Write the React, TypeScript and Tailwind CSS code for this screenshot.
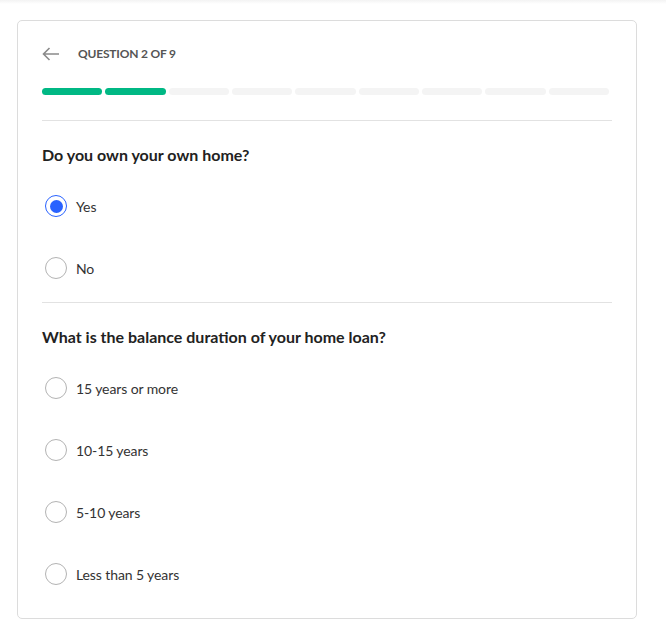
import React, { useState } from "react";

const questions = [
  {
    id: "own",
    title: "Do you own your own home?",
    options: ["Yes", "No"],
  },
  {
    id: "loan",
    title: "What is the balance duration of your home loan?",
    options: ["15 years or more", "10-15 years", "5-10 years", "Less than 5 years"],
  },
];

const Radio = ({ checked }: { checked: boolean }) => (
  <span
    className={
      checked
        ? "flex h-[22px] w-[22px] items-center justify-center rounded-full border-[1.5px] border-[#2962ff] bg-white"
        : "flex h-[22px] w-[22px] items-center justify-center rounded-full border border-[#b3b3b3] bg-white"
    }
  >
    {checked && <span className="h-[13px] w-[13px] rounded-full bg-[#2962ff]" />}
  </span>
);

const App: React.FC = () => {
  const [answers, setAnswers] = useState<Record<string, string>>({ own: "Yes" });
  const step = 2;
  const total = 9;

  return (
    <div
      className="min-h-[644px] bg-white"
      style={{ fontFamily: "Lato, 'Open Sans', Arial, sans-serif" }}
    >
      <div className="h-[4px] bg-gradient-to-b from-[#f3f3f3] to-white" />
      <div className="px-[17px] pt-[16px]">
        <div className="w-[620px] rounded-[5px] border border-[#dcdcdc] bg-white px-[24px] pt-[25px] pb-[13px]">
          {/* Header */}
          <div className="flex h-[16px] items-center">
            <button className="flex items-center text-[#8a8a8a]">
              <svg width="18" height="14" viewBox="0 0 18 14" fill="none" stroke="currentColor" strokeWidth="1.6">
                <path d="M17 7H1.5M7.5 1L1.5 7l6 6" />
              </svg>
            </button>
            <span className="ml-[18px] text-[12px] font-bold tracking-[-0.2px] text-[#555]">
              QUESTION {step} OF {total}
            </span>
          </div>

          {/* Progress */}
          <div className="mt-[26px] flex">
            {Array.from({ length: total }).map((_, i) => (
              <div key={i} className="flex-1 pr-[3px]">
                <div
                  className={
                    i < step
                      ? "h-[7px] rounded-full bg-[#00b884]"
                      : "h-[7px] rounded-full bg-[#f4f4f4]"
                  }
                />
              </div>
            ))}
          </div>

          {questions.map((q, qi) => (
            <div key={q.id}>
              <div className={qi === 0 ? "mt-[25px] border-t border-[#e2e2e2]" : "mt-[3px] border-t border-[#e2e2e2]"} />
              <h2 className="mt-[24px] text-[16px] leading-[20px] font-bold text-[#222]">{q.title}</h2>
              <div className="mt-[10px]">
                {q.options.map((opt) => (
                  <label
                    key={opt}
                    className="flex h-[62px] cursor-pointer items-center gap-[9px] pl-[3px]"
                    onClick={() => setAnswers({ ...answers, [q.id]: opt })}
                  >
                    <Radio checked={answers[q.id] === opt} />
                    <span className="text-[14px] tracking-[-0.1px] text-[#333]">{opt}</span>
                  </label>
                ))}
              </div>
            </div>
          ))}
        </div>
      </div>
    </div>
  );
};

export default App;
